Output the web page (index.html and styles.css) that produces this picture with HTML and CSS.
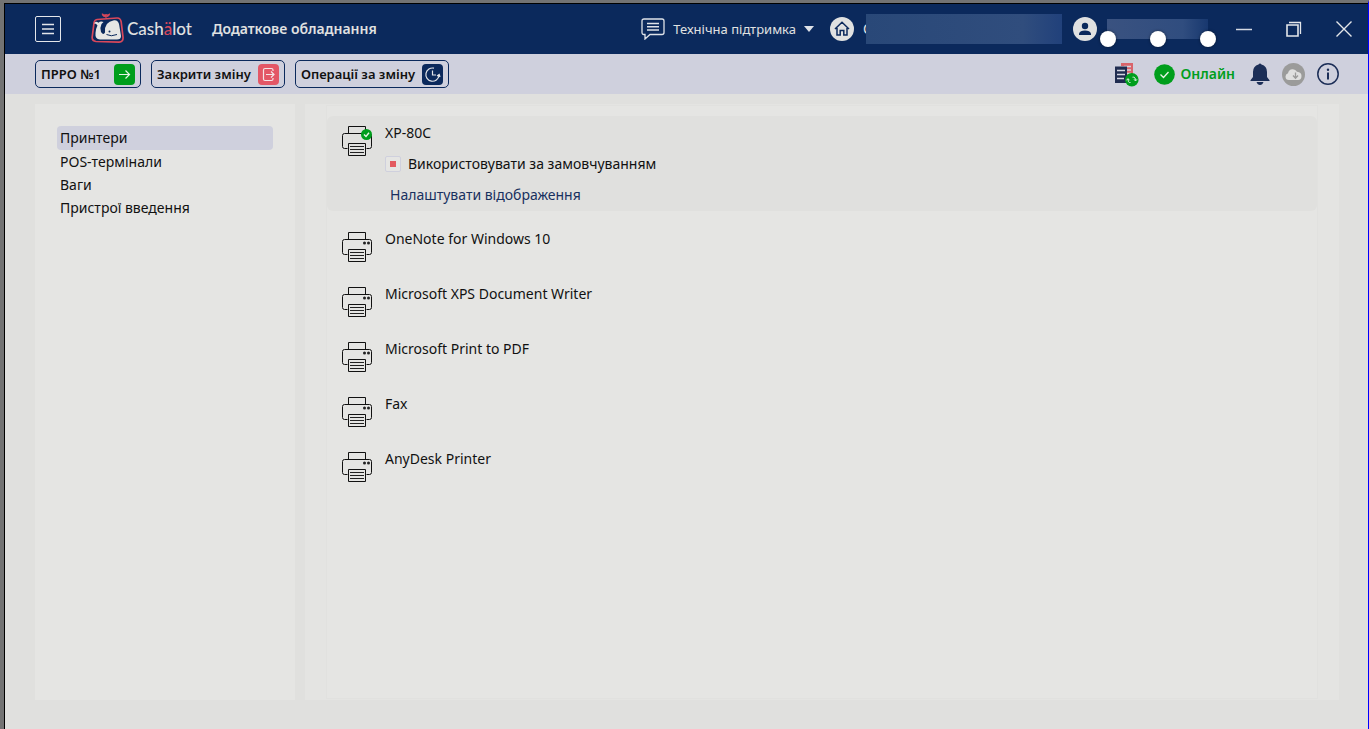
FILE: index.html
```html
<!DOCTYPE html>
<html lang="uk">
<head>
  <meta charset="UTF-8">
  <title>Cashälot</title>
  <link rel="stylesheet" href="styles.css">
</head>
<body>
  <svg class="sprite" aria-hidden="true">
    <symbol id="printer" viewBox="0 0 30 30">
      <path d="M6.500 7.500V.5H23.500V7.500M5.500 22.500H2.500Q.5 22.500 .5 20.500V9.500Q.5 7.500 2.500 7.500H27.500Q29.500 7.500 29.500 9.500V20.500Q29.500 22.500 27.500 22.500H24.500" fill="none" stroke="#111"/>
      <path d="M6.500 17.500H23.500V29.500H6.500Z" fill="none" stroke="#111"/>
      <path d="M8 20.500H22M8 23.500H22M8 26.500H22" stroke="#222"/>
    </symbol>
    <symbol id="dots" viewBox="0 0 30 30">
      <circle cx="22.500" cy="11" r="1.500" fill="#222"/>
      <circle cx="26.500" cy="11" r="1.500" fill="#222"/>
    </symbol>
  </svg>

  <header class="header">
    <button class="menu-btn" aria-label="Меню">
      <svg width="12" height="12" viewBox="0 0 12 12"><path d="M0 1.500H12M0 6H12M0 10.500H12" stroke="#e4e6ea" stroke-width="1.300"/></svg>
    </button>
    <a class="logo" href="#">
      <svg width="33" height="32" viewBox="0 0 33 32">
        <path d="M6 6.500L26 5Q29.500 4.800 30.200 9L32 24Q32.500 29 28 29.200L5 28.500Q.8 28 1.200 24L3 10Q3.500 6.800 6 6.500Z" fill="none" stroke="#d9485b" stroke-width="1.700"/>
        <path d="M15 5Q14.600 3 15.300 1.500Q13.500 2.300 11 .8Q11.200 3.800 15 4Q18.500 3.600 18.800 .8Q16.500 2.500 15.300 1.500" fill="#d9485b" stroke="#d9485b" stroke-width=".8"/>
        <path d="M3 10.500Q4.500 7.500 7.500 9.800Q9.500 7.500 12.500 9L10.500 11Q8.500 15 10 19Q12.500 22.500 14 19.500Q13 9 23 7.300Q27.500 7 28.200 12L30 23Q30 26.500 26 26.500H9Q3.800 26 4.500 20Q5 15 6.500 12.500Q5 10 3 10.500Z" fill="#e6e6e4"/>
        <path d="M15.500 21.500Q20 24 26 21.500" fill="none" stroke="#0b295c"/>
        <circle cx="18.500" cy="18.500" r="1" fill="#0b295c"/>
      </svg>
      <span class="logo-text">Cash<span class="logo-accent">ä</span>lot</span>
    </a>
    <h1 class="title">Додаткове обладнання</h1>

    <button class="support">
      <svg width="24" height="22" viewBox="0 0 24 22"><path d="M3 1H21Q23 1 23 3V14.500Q23 16.500 21 16.500H9L4 21V16.500H3Q1 16.500 1 14.500V3Q1 1 3 1Z" fill="none" stroke="#dfe2e8" stroke-width="1.300"/><path d="M6 5.500H18M6 8.800H18M6 12H18" stroke="#dfe2e8" stroke-width="1.400"/></svg>
      <span class="support-text">Технічна підтримка</span>
      <svg width="10" height="6" viewBox="0 0 10 6"><path d="M0 0H10L5 6Z" fill="#dfe2e8"/></svg>
    </button>
    <button class="company" aria-label="Компанія">
      <svg width="24" height="24" viewBox="0 0 24 24"><circle cx="12" cy="12" r="12" fill="#e0e1e1"/><path d="M5 12L12 5.300L19 12M7 11V18H10.200V13.500H13.800V18H17V11" fill="none" stroke="#0b295c" stroke-width="1.500"/></svg>
      <span class="company-letter">С</span>
      <span class="company-name"></span>
    </button>
    <button class="user" aria-label="Користувач">
      <svg width="24" height="24" viewBox="0 0 24 24"><circle cx="12" cy="12" r="12" fill="#e0e1e1"/><circle cx="12" cy="9" r="3.200" fill="#0b295c"/><path d="M6 18V16.500Q7 13.500 12 13.500Q17 13.500 18 16.500V18Z" fill="#0b295c"/></svg>
      <span class="user-name"><i class="handle"></i><i class="handle handle-mid"></i><i class="handle handle-end"></i></span>
    </button>
    <div class="window-buttons">
      <button aria-label="Згорнути"><svg width="16" height="16" viewBox="0 0 16 16"><path d="M0 8.500H16" stroke="#d5dae3" stroke-width="1.500"/></svg></button>
      <button aria-label="Відновити"><svg width="16" height="16" viewBox="0 0 16 16"><path d="M1 4H12V15H1Z" fill="none" stroke="#e4e6ea" stroke-width="1.600"/><path d="M3 1.500H14.500V13" fill="none" stroke="#e4e6ea" stroke-width="1.300"/></svg></button>
      <button aria-label="Закрити"><svg width="16" height="16" viewBox="0 0 16 16"><path d="M.5 .5L15.500 15.500M15.500 .5L.5 15.500" stroke="#e4e6ea" stroke-width="1.400"/></svg></button>
    </div>
  </header>

  <div class="toolbar">
    <button class="tool-btn">ПРРО №1
      <svg class="gap-wide" width="21" height="21" viewBox="0 0 21 21"><rect width="21" height="21" rx="4" fill="#009e1c"/><path d="M5 10.500H15.500M11.500 6.500L15.500 10.500L11.500 14.500" fill="none" stroke="#e8f5e8" stroke-width="1.200"/></svg>
    </button>
    <button class="tool-btn">Закрити зміну
      <svg width="21" height="21" viewBox="0 0 21 21"><rect width="21" height="21" rx="4" fill="#e35766"/><path d="M15 7V6Q15 4.500 13.500 4.500H7Q5.500 4.500 5.500 6V15Q5.500 16.500 7 16.500H13.500Q15 16.500 15 15V14M8 10.500H16M13 7.500L16 10.500L13 13.500" fill="none" stroke="#f5e5e7" stroke-width="1.200"/></svg>
    </button>
    <button class="tool-btn">Операції за зміну
      <svg width="21" height="21" viewBox="0 0 21 21"><rect width="21" height="21" rx="4" fill="#0b295c"/><path d="M12 4.200A6.600 6.600 0 1 0 17 11.500M10.500 6.500V11H14M15 12L17.200 10.500L18 13" fill="none" stroke="#e4e6ea" stroke-width="1.200"/></svg>
    </button>

    <div class="status">
      <button aria-label="Документи">
        <svg width="25" height="25" viewBox="0 0 25 25"><path d="M7 1H19V16H13V4H7Z" fill="#d9646b"/><path d="M10 4.500H17M12 8H17M12 11.500H17" stroke="#d5d6e2" stroke-width="1.300"/><rect x="1" y="4.500" width="12" height="16.500" fill="#202c50"/><path d="M3 8.500H11M3 12.500H11M3 16.500H10" stroke="#d5d6e2" stroke-width="1.500"/><circle cx="17.800" cy="17.800" r="6.800" fill="#009e1c"/><path d="M16.500 20.500H15.500Q14 20.500 14 17M12.500 18.300L14 16.600L15.500 18.300M18.500 15.200H19.800Q21.500 15.200 21.500 18.500M20 17.300L21.500 19L23 17.300" fill="none" stroke="#d8efdc"/></svg>
      </button>
      <span class="online">
        <svg width="21" height="21" viewBox="0 0 21 21"><circle cx="10.500" cy="10.500" r="10.300" fill="#009e1c"/><path d="M6.500 10.500L9.500 13.500L14.500 8" fill="none" stroke="#e8f5e8" stroke-width="1.300"/></svg>
        Онлайн
      </span>
      <button aria-label="Сповіщення">
        <svg width="20" height="22" viewBox="0 0 20 22"><path d="M8.500 1.500Q10 -.5 11.500 1.500Q17 3 17 9V14L19.500 17.200V18H.5V17.200L3 14V9Q3 3 8.500 1.500Z" fill="#1c2e57"/><path d="M6.500 19H13.500Q12.500 22 10 22Q7.500 22 6.500 19Z" fill="#1c2e57"/></svg>
      </button>
      <button aria-label="Хмара">
        <svg width="23" height="23" viewBox="0 0 23 23"><circle cx="11.500" cy="11.500" r="11.500" fill="#9b9b9a"/><path d="M7 17Q3.500 17 3.500 13.500Q3.500 11 6 10.300Q6.500 6.500 10.500 6.200Q13.500 6 15 8.700Q19.500 9 19.500 13Q19.500 17 16 17Z" fill="#e0e0df"/><path d="M13.500 9.500V15M11 12.500L13.500 15.200L16 12.500" fill="none" stroke="#9b9b9a" stroke-width="1.300"/></svg>
      </button>
      <button aria-label="Інформація">
        <svg width="22" height="22" viewBox="0 0 22 22"><circle cx="11" cy="11" r="10.200" fill="none" stroke="#1c2e57" stroke-width="1.500"/><circle cx="11" cy="6.800" r="1.200" fill="#1c2e57"/><path d="M11 9.500V16.500" stroke="#1c2e57" stroke-width="2"/></svg>
      </button>
    </div>
  </div>

  <main class="content">
    <nav class="sidebar">
      <a class="active" href="#">Принтери</a>
      <a href="#">POS-термінали</a>
      <a href="#">Ваги</a>
      <a href="#">Пристрої введення</a>
    </nav>

    <section class="panel">
      <ul class="printers">
        <li class="printer selected">
          <svg class="printer-icon" viewBox="0 0 30 30"><use href="#printer"/><circle cx="24.500" cy="8.500" r="5.500" fill="#009e1c"/><path d="M22 8.500L24 10.500L27 6.800" fill="none" stroke="#e8f5e8" stroke-width="1.400"/></svg>
          <div class="printer-info">
            <span>XP-80C</span>
            <label class="default"><input type="checkbox" checked>Використовувати за замовчуванням</label>
            <a class="settings" href="#">Налаштувати відображення</a>
          </div>
        </li>
        <li class="printer">
          <svg class="printer-icon"><use href="#printer"/><use href="#dots"/></svg>
          <span>OneNote for Windows 10</span>
        </li>
        <li class="printer">
          <svg class="printer-icon"><use href="#printer"/><use href="#dots"/></svg>
          <span>Microsoft XPS Document Writer</span>
        </li>
        <li class="printer">
          <svg class="printer-icon"><use href="#printer"/><use href="#dots"/></svg>
          <span>Microsoft Print to PDF</span>
        </li>
        <li class="printer">
          <svg class="printer-icon"><use href="#printer"/><use href="#dots"/></svg>
          <span>Fax</span>
        </li>
        <li class="printer">
          <svg class="printer-icon"><use href="#printer"/><use href="#dots"/></svg>
          <span>AnyDesk Printer</span>
        </li>
      </ul>
    </section>
  </main>
</body>
</html>
```
FILE: styles.css
```css
* {
  box-sizing: border-box;
}

body {
  margin: 0;
  min-height: 100vh;
  display: flex;
  flex-direction: column;
  border-top: 3px solid #737373;
  border-left: 4px solid #737373;
  border-right: 1px solid #0000ff;
  background: #e0e0de;
  color: #111;
  font-family: "Noto Sans", "Open Sans", sans-serif;
  font-size: 14px;
  line-height: 20px;
}

button {
  padding: 0;
  border: none;
  background: none;
  color: inherit;
  font: inherit;
  cursor: pointer;
}

a {
  color: inherit;
  text-decoration: none;
}

svg {
  display: block;
  flex-shrink: 0;
}

.sprite {
  position: absolute;
  width: 0;
  height: 0;
}

/* header */
.header {
  display: flex;
  align-items: center;
  height: 51px;
  padding: 0 16px 0 30px;
  border-top: 1px solid #000;
  border-left: 1px solid #000;
  background: #0b295c;
  color: #e0e1e1;
}

.menu-btn {
  display: flex;
  align-items: center;
  justify-content: center;
  width: 26px;
  height: 26px;
  border: 1px solid #e4e6ea;
  border-radius: 2px;
}

.logo {
  display: flex;
  align-items: center;
  gap: 3px;
  margin-left: 30px;
}

.logo-text {
  font-family: Lato, sans-serif;
  font-size: 17px;
  font-weight: 500;
}

.logo-accent {
  color: #d9485b;
}

.title {
  margin: 0 auto 0 20px;
  font-size: 14px;
  font-weight: 600;
}

.support {
  display: flex;
  align-items: center;
  gap: 8px;
  margin-right: 16px;
}

.support-text {
  font-size: 13px;
}

.company,
.user {
  display: flex;
  align-items: center;
}

.company-letter {
  width: 9px;
  margin-left: 9px;
}

/* the masked name lies over the rest of the text */
.company-name {
  position: relative;
  width: 196px;
  height: 30px;
  margin-left: -6px;
  background: linear-gradient(90deg, #294878, #304d7d 80%, #21417b);
}

.user {
  gap: 10px;
  margin-left: 11px;
}

.user-name {
  position: relative;
  width: 101px;
  height: 20px;
  background: linear-gradient(90deg, #3a5280, #304d7f 75%, #18386f);
}

.handle {
  position: absolute;
  left: -7px;
  bottom: -8px;
  width: 16px;
  height: 16px;
  border-radius: 50%;
  background: #fff;
  box-shadow: 0 0 3px rgba(0, 0, 0, 0.5);
}

.handle-mid {
  left: 43px;
}

.handle-end {
  left: 93px;
}

.window-buttons {
  display: flex;
  gap: 34px;
  margin-left: 28px;
}

/* toolbar */
.toolbar {
  display: flex;
  align-items: center;
  gap: 10px;
  height: 40px;
  padding: 0 29px 0 30px;
  border-left: 1px solid #000;
  background: #cfd0dd;
}

.tool-btn {
  display: flex;
  align-items: center;
  gap: 7px;
  height: 28px;
  padding: 0 5px;
  border: 1px solid #0b295c;
  border-radius: 5px;
  font-size: 13px;
  font-weight: 600;
}

.gap-wide {
  margin-left: 6px;
}

.status {
  display: flex;
  align-items: center;
  gap: 12px;
  margin-left: auto;
}

.online {
  display: flex;
  align-items: center;
  gap: 5px;
  margin: 0 3px;
  color: #009e1c;
  font-weight: 600;
}

/* content */
.content {
  flex: 1;
  display: flex;
  gap: 10px;
  padding: 10px 29px 29px 30px;
  border-left: 1px solid #000;
}

.sidebar {
  width: 260px;
  padding: 22px;
  background: #e5e5e3;
}

.sidebar a {
  display: block;
  padding: 1px 3px;
  line-height: 21px;
}

.sidebar .active {
  line-height: 22px;
  border-radius: 4px;
  background: #cfd0dd;
}

.panel {
  flex: 1;
  display: flex;
  padding: 1px 21px;
  background: #e4e4e2;
}

.printers {
  flex: 1;
  margin: 0;
  padding: 10px 0;
  list-style: none;
  border: 1px solid #e1e1df;
  background: #e5e5e3;
}

.printer {
  display: flex;
  gap: 13px;
  height: 55px;
  padding: 7px 15px;
}

.printer-icon {
  width: 30px;
  height: 30px;
  margin-top: 3px;
}

.selected {
  height: auto;
  margin-bottom: 11px;
  padding-bottom: 6px;
  border-radius: 6px;
  background: #e0e0de;
}

.printer-info {
  display: flex;
  flex-direction: column;
  align-items: flex-start;
  gap: 11px;
}

.default {
  display: flex;
  align-items: center;
  gap: 7px;
}

.default input {
  appearance: none;
  width: 16px;
  height: 16px;
  margin: 0;
  border: 1px solid #cfd0dd;
  border-radius: 2px;
  background: #e5e5e3;
}

.default input:checked {
  background: linear-gradient(#e35a5f, #e35a5f) center / 6px 6px no-repeat #e5e5e3;
}

.settings {
  padding-left: 5px;
  color: #18305f;
}
```
